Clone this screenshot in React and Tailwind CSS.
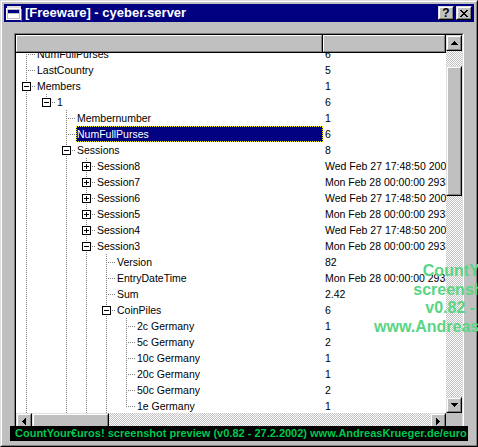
import React from "react";

const WED = "Wed Feb 27 17:48:50 2002";
const MON = "Mon Feb 28 00:00:00 29339";

const g1 = [true];
const g2 = [true, false];
const g3 = [true, false, true];
const g4 = [true, false, true, true];
const g5 = [true, false, true, true, true];

const rows = [
    { level: 0, guides: [], kind: "leaf", label: "NumFullPurses", value: "6" },
    { level: 0, guides: [], kind: "leaf", label: "LastCountry", value: "5" },
    { level: 0, guides: [], kind: "minus", label: "Members", value: "1" },
    { level: 1, guides: g1, kind: "minus", label: "1", value: "6", last: true },
    { level: 2, guides: g2, kind: "leaf", label: "Membernumber", value: "1" },
    { level: 2, guides: g2, kind: "leaf", label: "NumFullPurses", value: "6", selected: true },
    { level: 2, guides: g2, kind: "minus", label: "Sessions", value: "8" },
    { level: 3, guides: g3, kind: "plus", label: "Session8", value: WED },
    { level: 3, guides: g3, kind: "plus", label: "Session7", value: MON },
    { level: 3, guides: g3, kind: "plus", label: "Session6", value: WED },
    { level: 3, guides: g3, kind: "plus", label: "Session5", value: MON },
    { level: 3, guides: g3, kind: "plus", label: "Session4", value: WED },
    { level: 3, guides: g3, kind: "minus", label: "Session3", value: MON },
    { level: 4, guides: g4, kind: "leaf", label: "Version", value: "82" },
    { level: 4, guides: g4, kind: "leaf", label: "EntryDateTime", value: MON },
    { level: 4, guides: g4, kind: "leaf", label: "Sum", value: "2.42" },
    { level: 4, guides: g4, kind: "minus", label: "CoinPiles", value: "6" },
    { level: 5, guides: g5, kind: "leaf", label: "2c Germany", value: "1" },
    { level: 5, guides: g5, kind: "leaf", label: "5c Germany", value: "2" },
    { level: 5, guides: g5, kind: "leaf", label: "10c Germany", value: "1" },
    { level: 5, guides: g5, kind: "leaf", label: "20c Germany", value: "1" },
    { level: 5, guides: g5, kind: "leaf", label: "50c Germany", value: "2" },
    { level: 5, guides: g5, kind: "leaf", label: "1e Germany", value: "1", last: true },
];

const dither = "bg-[image:repeating-conic-gradient(#c0c0c0_0_25%,#ffffff_0_50%)] bg-[length:2px_2px]";

function Raised({ className = "", children }) {
    return (
        <div className={"border border-t-[#dfdfdf] border-l-[#dfdfdf] border-b-black border-r-black " + className}>
            <div className="flex h-full w-full items-center justify-center border border-t-white border-l-white border-b-[#808080] border-r-[#808080] bg-[#c0c0c0]">
                {children}
            </div>
        </div>
    );
}

// little pixel arrows for the scroll buttons
function Arrow({ dir }) {
    const up = [[3, 0, 1], [2, 1, 3], [1, 2, 5], [0, 3, 7]];
    const down = [[0, 0, 7], [1, 1, 5], [2, 2, 3], [3, 3, 1]];
    if (dir === "up" || dir === "down") {
        const px = dir === "up" ? up : down;
        return (
            <svg width="7" height="4" shapeRendering="crispEdges">
                {px.map(([x, y, w], i) => <rect key={i} x={x} y={y} width={w} height="1" fill="#000" />)}
            </svg>
        );
    }
    const px = dir === "left" ? [[0, 3, 1], [1, 2, 3], [2, 1, 5], [3, 0, 7]] : [[0, 0, 7], [1, 1, 5], [2, 2, 3], [3, 3, 1]];
    return (
        <svg width="4" height="7" shapeRendering="crispEdges">
            {px.map(([x, y, h], i) => <rect key={i} x={x} y={y} width="1" height={h} fill="#000" />)}
        </svg>
    );
}

function TreeLines({ level, guides, kind, last }) {
    const w = (level + 1) * 20;
    const base = level * 20;
    const cx = base + 10.5;
    const dot = { stroke: "#808080", strokeDasharray: "1 1" };
    return (
        <svg width={w} height="16" className="shrink-0" shapeRendering="crispEdges">
            {guides.map((on, i) => on && (
                <line key={i} x1={i * 20 + 10.5} y1="0" x2={i * 20 + 10.5} y2="16" {...dot} />
            ))}
            <line x1={cx} y1="0" x2={cx} y2={last ? 8 : 16} {...dot} />
            <line x1={base + 10} y1="8.5" x2={base + 20} y2="8.5" {...dot} />
            {kind !== "leaf" && (
                <>
                    <rect x={base + 6.5} y="4.5" width="8" height="8" fill="#fff" stroke="#000" />
                    <line x1={base + 8} y1="8.5" x2={base + 13} y2="8.5" stroke="#000" />
                    {kind === "plus" && <line x1={cx} y1="6" x2={cx} y2="11" stroke="#000" />}
                </>
            )}
        </svg>
    );
}

function TreeRow({ row }) {
    return (
        <div className="flex h-4 leading-4">
            <div className="flex w-[307px] shrink-0 items-center overflow-hidden">
                <TreeLines level={row.level} guides={row.guides} kind={row.kind} last={row.last} />
                {row.selected ? (
                    <div className="h-4 flex-1 whitespace-nowrap border border-dotted border-[#ffff00] bg-[#000080] leading-[14px] text-white">
                        {row.label}
                    </div>
                ) : (
                    <div className="whitespace-nowrap pl-px">{row.label}</div>
                )}
            </div>
            <div className="w-[123px] shrink-0 overflow-hidden whitespace-nowrap pl-[2px]">{row.value}</div>
        </div>
    );
}

function HeaderCell({ className }) {
    return (
        <div className={"h-full border-b border-r border-black " + className}>
            <div className="h-full border border-t-white border-l-white border-b-[#808080] border-r-[#808080] bg-[#c0c0c0]" />
        </div>
    );
}

function WinIcon() {
    return (
        <svg width="16" height="16" shapeRendering="crispEdges">
            <rect x="1" y="1" width="14" height="2" fill="#dfdfdf" />
            <rect x="0.5" y="3.5" width="14" height="11" fill="#c0c0c0" stroke="#ffffff" />
            <rect x="2" y="5" width="11" height="3" fill="#000080" />
            <rect x="2" y="9" width="11" height="4" fill="#ffffff" />
            <line x1="15.5" y1="4" x2="15.5" y2="16" stroke="#808080" />
        </svg>
    );
}

function CloseGlyph() {
    const px = [[0, 0], [1, 0], [6, 0], [7, 0], [1, 1], [2, 1], [5, 1], [6, 1], [2, 2], [3, 2], [4, 2], [5, 2], [3, 3], [4, 3], [2, 4], [3, 4], [4, 4], [5, 4], [1, 5], [2, 5], [5, 5], [6, 5], [0, 6], [1, 6], [6, 6], [7, 6]];
    return (
        <svg width="8" height="7" shapeRendering="crispEdges">
            {px.map(([x, y], i) => <rect key={i} x={x} y={y} width="1" height="1" fill="#000" />)}
        </svg>
    );
}

export default function App() {
    return (
        <div className="relative h-[447px] w-[478px] overflow-hidden bg-[#c0c0c0] font-['Liberation_Sans',Arial,sans-serif] text-[10.5px] text-black">
            <div className="h-full border border-t-[#dfdfdf] border-l-[#dfdfdf] border-b-black border-r-black">
                <div className="flex h-full flex-col border border-t-white border-l-white border-b-[#808080] border-r-[#808080] p-[2px]">

                    {/* title bar */}
                    <div className="flex h-[18px] shrink-0 items-center bg-[#000080] pl-[2px] pr-[2px]">
                        <WinIcon />
                        <div className="ml-[3px] flex-1 whitespace-nowrap text-[13px] font-bold leading-[18px] text-white">
                            [Freeware] - cyeber.server
                        </div>
                        <Raised className="h-[14px] w-4">
                            <span className="text-[12px] font-bold leading-[10px]">?</span>
                        </Raised>
                        <Raised className="ml-[2px] h-[14px] w-4">
                            <CloseGlyph />
                        </Raised>
                    </div>

                    {/* list control */}
                    <div className="px-[10px] pt-[11px]">
                        <div className="h-[398px] border border-t-[#808080] border-l-[#808080] border-b-white border-r-white">
                            <div className="flex h-full flex-col border border-t-black border-l-black border-b-[#dfdfdf] border-r-[#dfdfdf] bg-white">
                                <div className="flex h-[378px]">
                                    <div className="flex w-[430px] flex-col">
                                        <div className="flex h-[18px] shrink-0">
                                            <HeaderCell className="w-[307px]" />
                                            <HeaderCell className="w-[123px]" />
                                        </div>
                                        <div className="h-[360px] overflow-hidden">
                                            <div className="-mt-[7px]">
                                                {rows.map((row, index) => (
                                                    <TreeRow key={index} row={row} />
                                                ))}
                                            </div>
                                        </div>
                                    </div>
                                    <div className="flex w-4 flex-col">
                                        <Raised className="h-4 shrink-0"><Arrow dir="up" /></Raised>
                                        <div className={"h-[15px] shrink-0 " + dither} />
                                        <Raised className="h-[130px] shrink-0" />
                                        <div className={"flex-1 " + dither} />
                                        <Raised className="h-4 shrink-0"><Arrow dir="down" /></Raised>
                                    </div>
                                </div>
                                <div className="flex h-4">
                                    <Raised className="w-4 shrink-0"><Arrow dir="left" /></Raised>
                                    <Raised className="w-[77px] shrink-0" />
                                    <div className={"flex-1 " + dither} />
                                    <Raised className="w-4 shrink-0"><Arrow dir="right" /></Raised>
                                    <div className="w-4 shrink-0 bg-[#c0c0c0]" />
                                </div>
                            </div>
                        </div>
                    </div>
                </div>
            </div>

            {/* watermark */}
            <div className="absolute left-[338px] top-[262px] w-[300px] text-center text-[16px] font-bold leading-[18.5px] text-[#5ad584]">
                <div>CountYour€uros!</div>
                <div>screenshot preview</div>
                <div>v0.82 - 27.2.2002</div>
                <div>www.AndreasKrueger.de/euro</div>
            </div>

            {/* preview banner */}
            <div className="absolute left-[10px] top-[426px] h-[15px] w-[458px] whitespace-nowrap bg-black pl-[5px] text-[11px] font-bold leading-[15px] text-[#00c850]">
                CountYour€uros! screenshot preview (v0.82 - 27.2.2002) www.AndreasKrueger.de/euro
            </div>
        </div>
    );
}
